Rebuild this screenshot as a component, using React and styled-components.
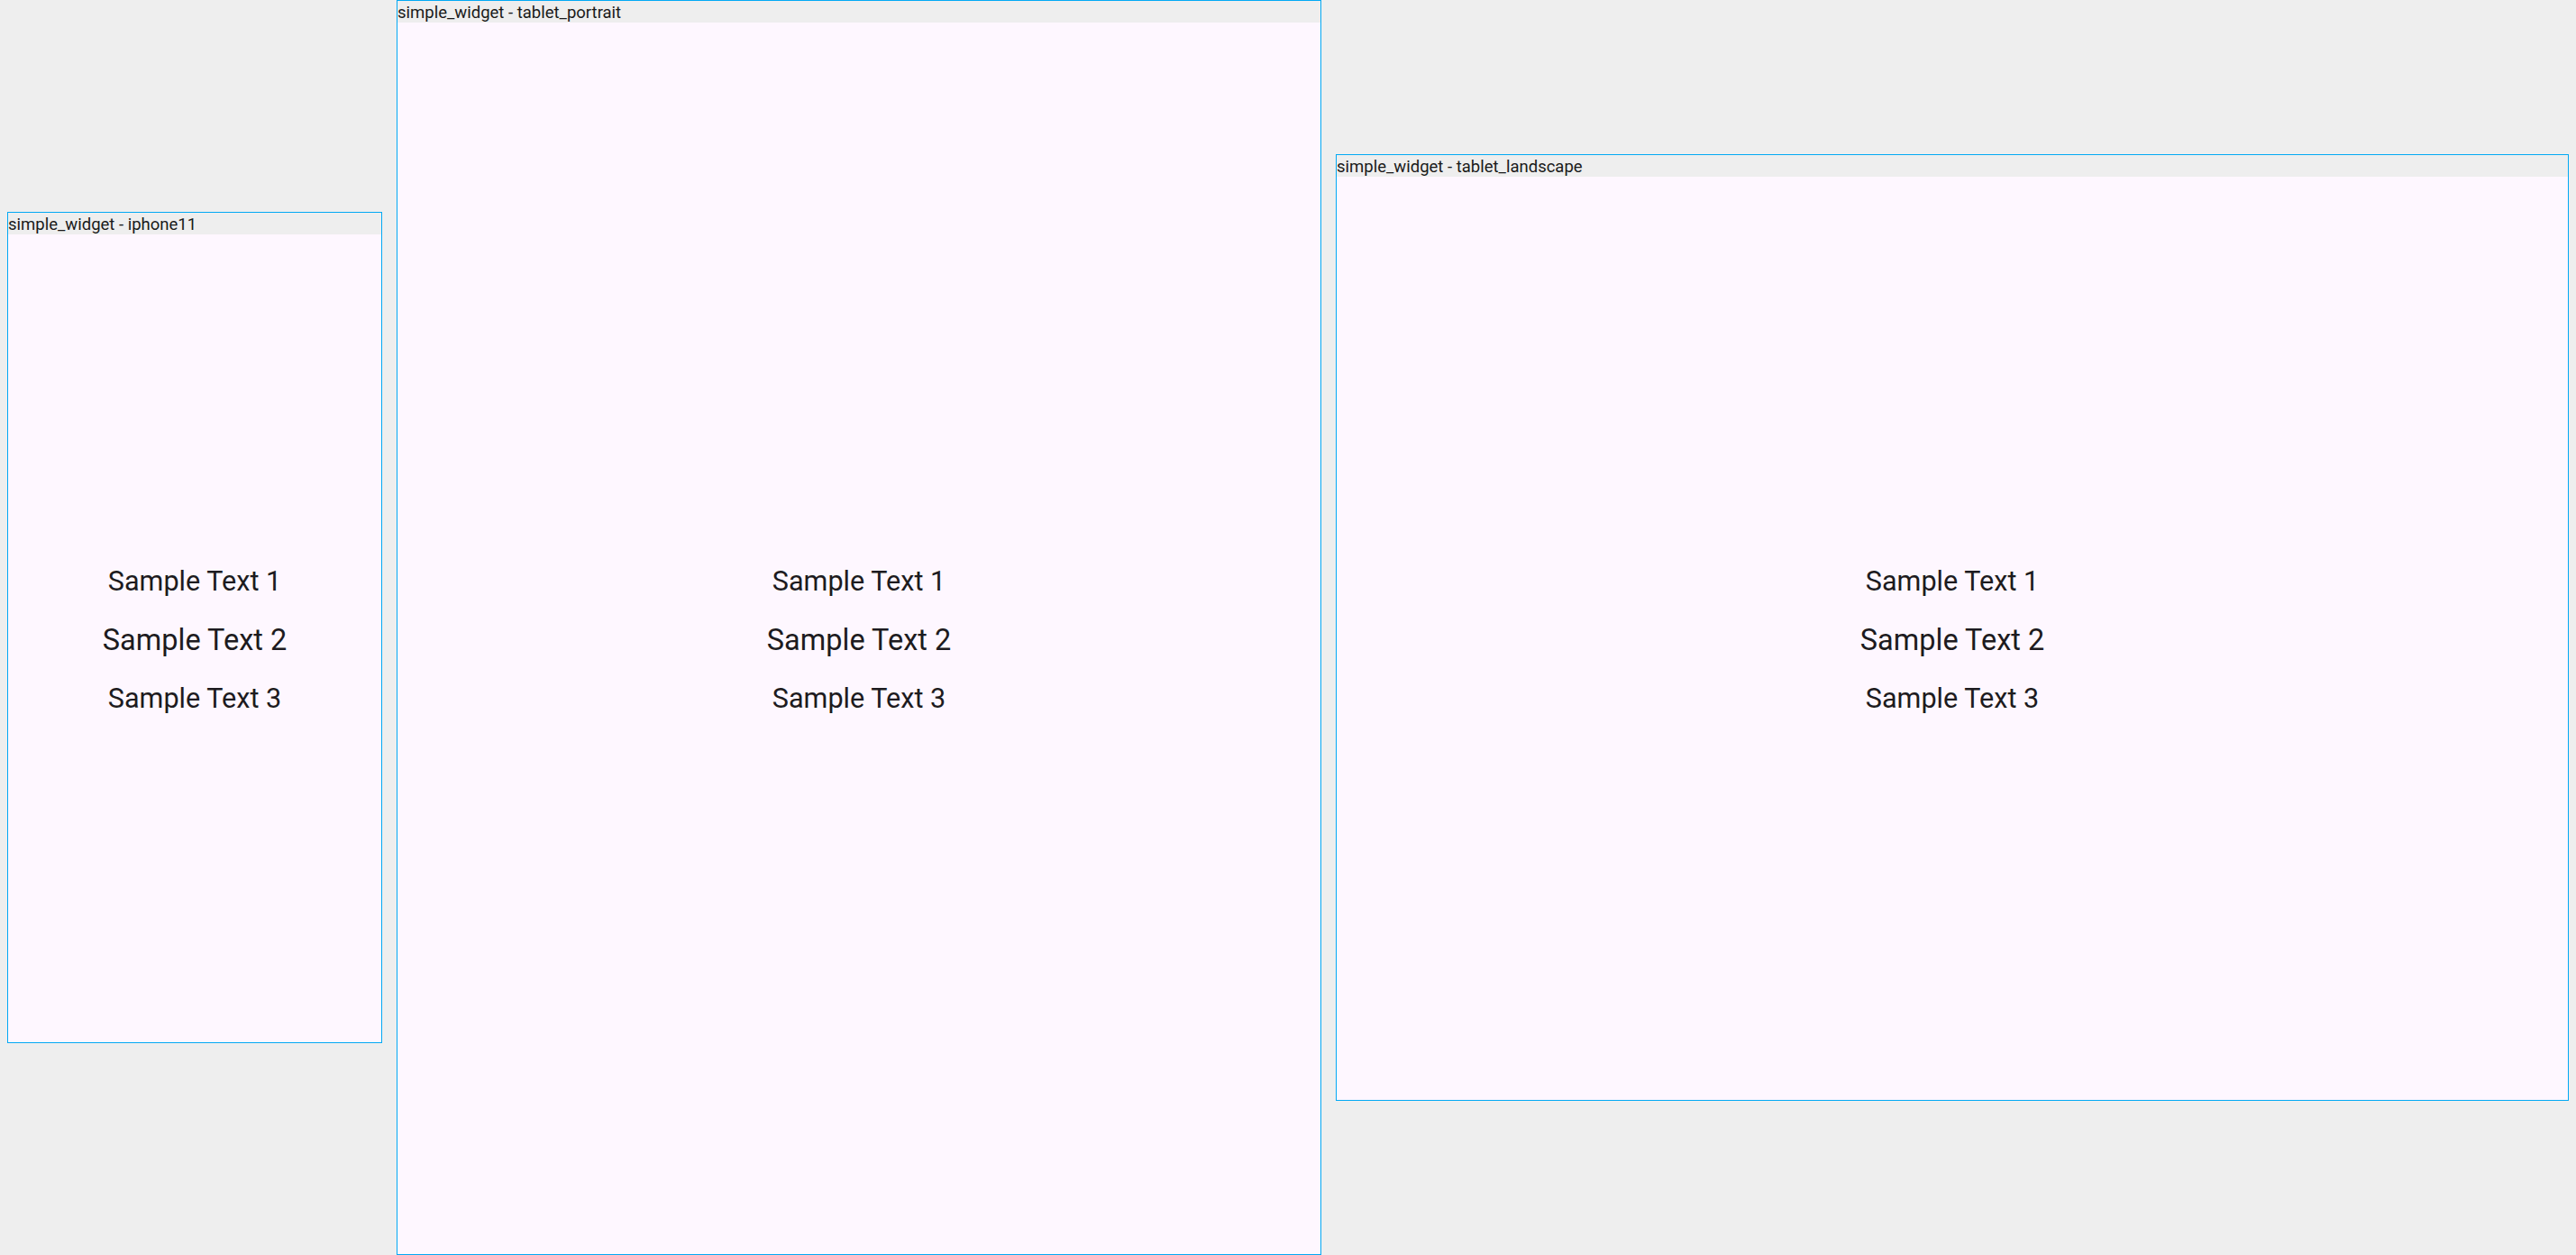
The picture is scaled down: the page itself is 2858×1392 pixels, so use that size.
import React from "react";
import styled, { createGlobalStyle } from "styled-components";

const GlobalStyle = createGlobalStyle`
  html, body {
    margin: 0;
    padding: 0;
    background: #eeeeee;
  }
  body {
    font-family: Roboto, "Noto Sans", sans-serif;
  }
`;

const Canvas = styled.div`
  display: flex;
  align-items: center;
  gap: 16px;
  padding: 0 8px;
  height: 1392px;
  box-sizing: border-box;
`;

const Frame = styled.div`
  display: flex;
  flex-direction: column;
  flex: none;
  border: 1px solid #03a9f4;
  background: #eeeeee;
`;

// descenders get cut by the header edge, like in the golden
const FrameHeader = styled.div`
  height: 24px;
  overflow: hidden;
  font-size: 18.5px;
  line-height: 20px;
  padding-top: 3px;
  box-sizing: border-box;
  color: #1a1a1a;
  white-space: nowrap;
`;

const Screen = styled.div`
  width: ${(p) => p.w}px;
  height: ${(p) => p.h}px;
  box-sizing: border-box;
  padding-top: 4px;
  background: #fef7ff;
  display: flex;
  flex-direction: column;
  align-items: center;
  justify-content: center;
  gap: 28px;
`;

const Sample = styled.div`
  font-size: ${(p) => (p.big ? 32.5 : 30.6)}px;
  line-height: 1.17;
  color: #1d1b20;
`;

const devices = [
  { name: "iphone11", w: 414, h: 896 },
  { name: "tablet_portrait", w: 1024, h: 1366 },
  { name: "tablet_landscape", w: 1366, h: 1024 },
];

function DeviceFrame({ name, w, h }) {
  return (
    <Frame>
      <FrameHeader>simple_widget - {name}</FrameHeader>
      <Screen w={w} h={h}>
        <Sample>Sample Text 1</Sample>
        <Sample big>Sample Text 2</Sample>
        <Sample>Sample Text 3</Sample>
      </Screen>
    </Frame>
  );
}

export default function App() {
  return (
    <>
      <GlobalStyle />
      <Canvas>
        {devices.map((d) => (
          <DeviceFrame key={d.name} {...d} />
        ))}
      </Canvas>
    </>
  );
}
